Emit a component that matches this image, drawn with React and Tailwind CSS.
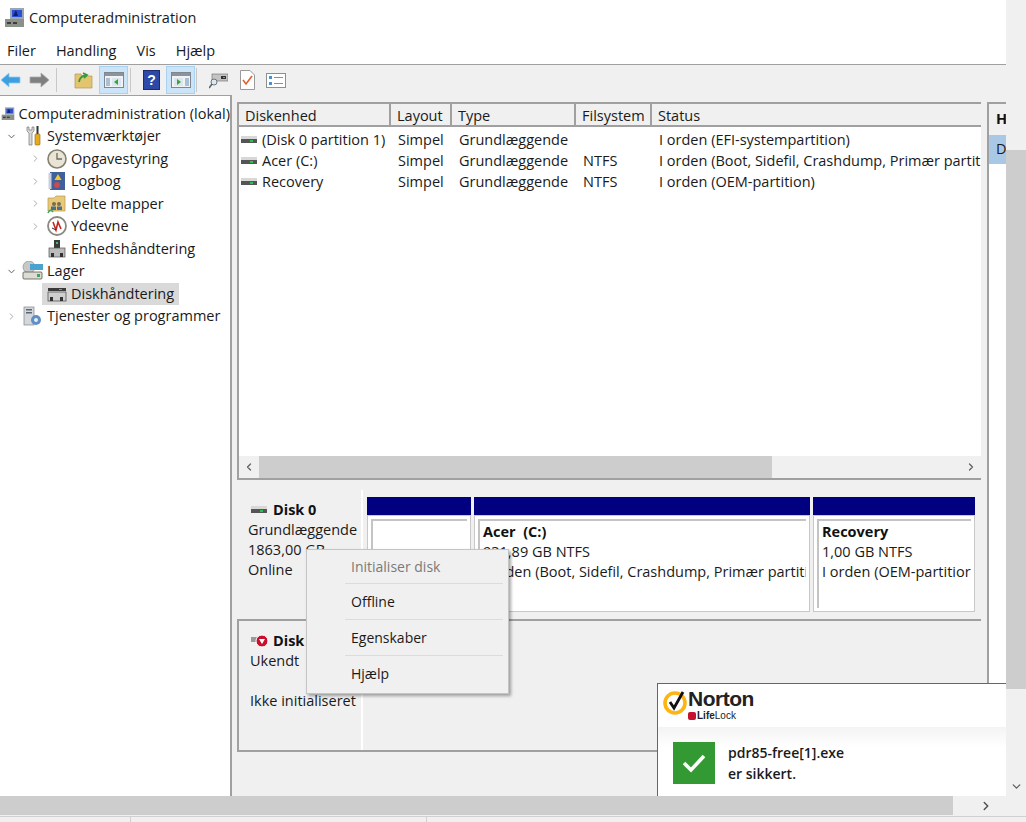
import { ChevronDown, ChevronRight, ChevronLeft } from 'lucide-react'

const font = { fontFamily: '"Open Sans", "Noto Sans", sans-serif' }

// --- small drawn icons ---
function DiskIcon({ className = '' }) {
  return (
    <svg width="16" height="10" viewBox="0 0 16 10" className={className}>
      <rect x="0" y="1" width="16" height="3" fill="#d8d8d8" />
      <rect x="0" y="4" width="16" height="4" fill="#555" />
      <rect x="9" y="5" width="3" height="2" fill="#2fc24a" />
    </svg>
  )
}

function ComputerIcon() {
  return (
    <svg width="22" height="20" viewBox="0 0 22 20">
      <rect x="6" y="0" width="14" height="11" fill="#9aa6b5" />
      <rect x="8" y="2" width="10" height="7" fill="#2a4fd0" />
      <path d="M9 8 L12 2 L14 8Z" fill="#10206a" />
      <rect x="1" y="11" width="19" height="8" fill="#8b9088" />
      <rect x="3" y="14" width="4" height="2" fill="#3c3c3c" />
      <rect x="9" y="14" width="4" height="2" fill="#3c3c3c" />
    </svg>
  )
}

function ToolsIcon() {
  return (
    <svg width="18" height="20" viewBox="0 0 18 20">
      <path d="M3 1 L3 5 L5 7 L5 19 L8 19 L8 7 L10 5 L10 1 L8 1 L8 4 L5 4 L5 1Z" fill="#d9d9d9" stroke="#777" strokeWidth="0.7" />
      <rect x="12.5" y="0" width="2" height="8" fill="#333" />
      <rect x="11" y="8" width="5" height="11" rx="1" fill="#e8a91c" stroke="#8a6510" strokeWidth="0.6" />
    </svg>
  )
}

function ClockIcon() {
  return (
    <svg width="20" height="20" viewBox="0 0 20 20">
      <circle cx="10" cy="10" r="9" fill="#e9e4d6" stroke="#85806f" strokeWidth="1.6" />
      <path d="M10 4 V10 H15" fill="none" stroke="#6f6a58" strokeWidth="1.3" />
    </svg>
  )
}

function LogIcon() {
  return (
    <svg width="18" height="20" viewBox="0 0 18 20">
      <rect x="2" y="1" width="15" height="18" fill="#3f5f9d" />
      <rect x="0.5" y="2" width="3" height="16" fill="#c9cfdb" />
      <path d="M10 3 L13.5 9 H6.5Z" fill="#f0c935" />
      <circle cx="9" cy="14" r="3" fill="#c94b4b" />
    </svg>
  )
}

function FolderIcon() {
  return (
    <svg width="19" height="20" viewBox="0 0 19 20">
      <path d="M1 4 H7 L9 2 H18 V17 H1Z" fill="#e8c97a" stroke="#b89a50" strokeWidth="0.7" />
      <circle cx="7" cy="10" r="2" fill="#7a6a50" />
      <circle cx="12" cy="10" r="2" fill="#7a6a50" />
      <rect x="4" y="12.5" width="5" height="3.5" fill="#4c6e8e" />
      <rect x="10" y="12.5" width="5" height="3.5" fill="#4c6e8e" />
      <path d="M1 19 Q3 14 6 18" fill="none" stroke="#3ea56a" strokeWidth="1.6" />
    </svg>
  )
}

function GaugeIcon() {
  return (
    <svg width="20" height="20" viewBox="0 0 20 20">
      <circle cx="10" cy="10" r="9" fill="#fff" stroke="#8a8a80" strokeWidth="1.8" />
      <path d="M6 6 L9 14 L11 6 L14 13" fill="none" stroke="#c0281f" strokeWidth="1.6" />
      <path d="M5 12 L9 14" stroke="#2c2c2c" strokeWidth="1" />
    </svg>
  )
}

function DeviceIcon() {
  return (
    <svg width="18" height="20" viewBox="0 0 18 20">
      <rect x="6" y="1" width="6" height="8" fill="#3a3a3a" />
      <rect x="8" y="3" width="2" height="2" fill="#39c552" />
      <rect x="1" y="9" width="16" height="9" fill="#bcbcbc" stroke="#555" strokeWidth="0.7" />
      <rect x="3" y="14" width="3" height="4" fill="#333" />
      <rect x="12" y="14" width="3" height="4" fill="#333" />
    </svg>
  )
}

function StorageIcon() {
  return (
    <svg width="22" height="20" viewBox="0 0 22 20">
      <circle cx="7" cy="6" r="6" fill="#c8c8c8" stroke="#8c8c8c" strokeWidth="0.7" />
      <rect x="8" y="3" width="13" height="6" fill="#4aa3cf" />
      <rect x="1" y="11" width="19" height="7" rx="1" fill="#dcdcd6" stroke="#55554f" strokeWidth="0.8" />
      <rect x="15" y="13" width="3" height="3" fill="#3fa552" />
    </svg>
  )
}

function DiskMgmtIcon() {
  return (
    <svg width="20" height="18" viewBox="0 0 20 18">
      <rect x="1" y="3" width="18" height="3" fill="#3a3a3a" />
      <rect x="12" y="4" width="3" height="1" fill="#3fc552" />
      <rect x="1" y="7" width="18" height="9" fill="#cfcfcf" stroke="#444" strokeWidth="0.7" />
      <rect x="3" y="12" width="3" height="4" fill="#333" />
      <rect x="13" y="12" width="3" height="4" fill="#333" />
    </svg>
  )
}

function ServicesIcon() {
  return (
    <svg width="19" height="20" viewBox="0 0 19 20">
      <rect x="1" y="1" width="10" height="18" fill="#d4d8dc" stroke="#7e848b" strokeWidth="0.7" />
      <rect x="3" y="3" width="6" height="1.5" fill="#5d6670" />
      <rect x="3" y="6" width="6" height="1.5" fill="#5d6670" />
      <circle cx="13" cy="14" r="5" fill="#5f8fc4" />
      <circle cx="13" cy="14" r="2" fill="#e5edf5" />
    </svg>
  )
}

// toolbar icons
function ArrowLeftBlue() {
  return (
    <svg width="21" height="16" viewBox="0 0 21 16">
      <path d="M1 8 L9 1 V5 H20 V11 H9 V15Z" fill="#3d9fe0" stroke="#8ccbf2" strokeWidth="0.8" />
    </svg>
  )
}

function ArrowRightGray() {
  return (
    <svg width="21" height="16" viewBox="0 0 21 16">
      <path d="M20 8 L12 1 V5 H1 V11 H12 V15Z" fill="#808080" stroke="#a8a8a8" strokeWidth="0.8" />
    </svg>
  )
}

function UpFolderIcon() {
  return (
    <svg width="19" height="18" viewBox="0 0 19 18">
      <path d="M1 3 H7 L8 5 H18 V17 H1Z" fill="#e3c56f" stroke="#b39a50" strokeWidth="0.7" />
      <path d="M5 11 Q6 5 12 4 M9 2 L13 4 L10 7" fill="none" stroke="#3c9a3c" strokeWidth="1.8" />
    </svg>
  )
}

function PaneIcon({ right }) {
  return (
    <svg width="20" height="16" viewBox="0 0 20 16">
      <rect x="0.5" y="0.5" width="19" height="15" fill="#f2f2f2" stroke="#7e8790" />
      <rect x="1" y="1" width="18" height="3" fill="#8b949c" />
      {right ? (
        <>
          <rect x="3" y="6" width="9" height="8" fill="#dce6ee" />
          <path d="M6 7 L10 10 L6 13Z" fill="#37a637" />
          <rect x="14" y="6" width="4" height="8" fill="#a9c0d4" />
        </>
      ) : (
        <>
          <rect x="2" y="6" width="4" height="8" fill="#a9c0d4" />
          <rect x="8" y="6" width="9" height="8" fill="#dce6ee" />
          <path d="M14 7 L10 10 L14 13Z" fill="#37a637" />
        </>
      )}
    </svg>
  )
}

function HelpBookIcon() {
  return (
    <svg width="17" height="20" viewBox="0 0 17 20">
      <rect x="0.5" y="0.5" width="16" height="19" fill="#2c49a8" stroke="#1a2c70" />
      <text x="8.5" y="15" textAnchor="middle" fontSize="14" fontWeight="700" fill="#fff" fontFamily="Liberation Sans, sans-serif">?</text>
    </svg>
  )
}

function ScanIcon() {
  return (
    <svg width="19" height="18" viewBox="0 0 19 18">
      <rect x="3" y="3" width="16" height="7" fill="#c4c4c4" stroke="#6a6a6a" strokeWidth="0.6" />
      <rect x="12" y="5" width="5" height="3" fill="#333" />
      <rect x="14" y="6" width="2" height="1" fill="#3fc552" />
      <circle cx="5" cy="11" r="3" fill="#dfe7ee" stroke="#6a7580" />
      <path d="M3 13 L0 17" stroke="#55606a" strokeWidth="1.5" />
    </svg>
  )
}

function CheckDocIcon() {
  return (
    <svg width="15" height="20" viewBox="0 0 15 20">
      <path d="M0.5 0.5 H10 L14.5 5 V19.5 H0.5Z" fill="#fff" stroke="#9a9a9a" />
      <path d="M3 10 L6 14 L12 6" fill="none" stroke="#e0602c" strokeWidth="1.6" />
    </svg>
  )
}

function ChecklistIcon() {
  return (
    <svg width="20" height="15" viewBox="0 0 20 15">
      <rect x="0.5" y="0.5" width="19" height="14" fill="#fff" stroke="#8a8f94" />
      <rect x="3" y="3" width="3" height="3" fill="#4a8fd0" />
      <rect x="3" y="9" width="3" height="3" fill="#4a8fd0" />
      <rect x="8" y="4" width="9" height="1" fill="#8a8f94" />
      <rect x="8" y="10" width="9" height="1" fill="#8a8f94" />
    </svg>
  )
}

function NortonLogo() {
  return (
    <svg width="26" height="26" viewBox="0 0 26 26">
      <circle cx="12" cy="14" r="10" fill="none" stroke="#fdb511" strokeWidth="3.6" />
      <path d="M7 13 L11 19 L20 3" fill="none" stroke="#111" strokeWidth="2.8" />
    </svg>
  )
}

// --- tree ---
const treeRows = [
  { label: 'Systemværktøjer', icon: <ToolsIcon />, chev: 'down', indent: 'pl-1' },
  { label: 'Opgavestyring', icon: <ClockIcon />, chev: 'right', indent: 'pl-[28px]' },
  { label: 'Logbog', icon: <LogIcon />, chev: 'right', indent: 'pl-[28px]' },
  { label: 'Delte mapper', icon: <FolderIcon />, chev: 'right', indent: 'pl-[28px]' },
  { label: 'Ydeevne', icon: <GaugeIcon />, chev: 'right', indent: 'pl-[28px]' },
  { label: 'Enhedshåndtering', icon: <DeviceIcon />, indent: 'pl-[28px]' },
  { label: 'Lager', icon: <StorageIcon />, chev: 'down', indent: 'pl-1' },
  { label: 'Diskhåndtering', icon: <DiskMgmtIcon />, indent: 'pl-[28px]', selected: true },
  { label: 'Tjenester og programmer', icon: <ServicesIcon />, chev: 'right', indent: 'pl-1' },
]

function TreeRow({ row }) {
  return (
    <div className={`flex items-center h-[22.5px] ${row.indent}`}>
      <span className="w-[14px] flex justify-center shrink-0">
        {row.chev === 'down' && <ChevronDown size={11} strokeWidth={2} className="text-[#555]" />}
        {row.chev === 'right' && <ChevronRight size={11} strokeWidth={2} className="text-[#a6a6a6]" />}
      </span>
      <div className={`flex items-center h-[22px] ${row.selected ? 'bg-[#d9d9d9] pr-[5px]' : ''}`}>
        <span className="w-[28px] pl-[1px] flex justify-center shrink-0">{row.icon}</span>
        <span className="ml-[1px] whitespace-nowrap">{row.label}</span>
      </div>
    </div>
  )
}

// --- volume list ---
const columns = [
  { label: 'Diskenhed', w: 'w-[152px]' },
  { label: 'Layout', w: 'w-[61px]' },
  { label: 'Type', w: 'w-[124px]' },
  { label: 'Filsystem', w: 'w-[76px]' },
  { label: 'Status', w: 'flex-1' },
]

const volumes = [
  ['(Disk 0 partition 1)', 'Simpel', 'Grundlæggende', '', 'I orden (EFI-systempartition)'],
  ['Acer (C:)', 'Simpel', 'Grundlæggende', 'NTFS', 'I orden (Boot, Sidefil, Crashdump, Primær partition)'],
  ['Recovery', 'Simpel', 'Grundlæggende', 'NTFS', 'I orden (OEM-partition)'],
]

function Partition({ className, children }) {
  return (
    <div className={`flex flex-col ${className}`}>
      <div className="h-[18px] bg-[#000080]" />
      <div className="flex-1 bg-white border border-[#c8c8c8] p-[3px]">
        <div className="h-full border-t-2 border-l-2 border-[#c4c4c4] pl-[3px] pt-[1px] leading-[20px] overflow-hidden whitespace-nowrap">
          {children}
        </div>
      </div>
    </div>
  )
}

export default function App() {
  return (
    <div style={font} className="relative flex h-[822px] w-[1026px] flex-col overflow-hidden bg-white text-[14.5px] text-[#1a1a1a]">
      <div className="flex min-h-0 flex-1">
        <div className="flex min-w-0 flex-1 flex-col">
          {/* title bar */}
          <div className="flex h-[35px] shrink-0 items-center pl-[4px] pt-[1px]">
            <ComputerIcon />
            <span className="ml-[3px] text-[14.5px]">Computeradministration</span>
          </div>

          {/* menu */}
          <div className="flex h-[30px] shrink-0 items-center gap-[20px] pl-[7px] pt-[2px] border-b border-[#a0a0a0]">
            <span>Filer</span>
            <span>Handling</span>
            <span>Vis</span>
            <span>Hjælp</span>
          </div>

          {/* toolbar */}
          <div className="flex h-[30px] shrink-0 items-center bg-[#f0f0f0] pl-[0px]">
            <ArrowLeftBlue />
            <span className="ml-[8px]"><ArrowRightGray /></span>
            <span className="mx-[6px] h-[24px] w-px bg-[#c8c8c8]" />
            <span className="ml-[11px]"><UpFolderIcon /></span>
            <span className="ml-[6px] flex h-[28px] w-[29px] items-center justify-center bg-[#cce4f7] border border-[#a8d2f0]"><PaneIcon /></span>
            <span className="ml-[2px] h-[24px] w-px bg-[#c8c8c8]" />
            <span className="ml-[12px]"><HelpBookIcon /></span>
            <span className="ml-[6px] flex h-[28px] w-[29px] items-center justify-center bg-[#cce4f7] border border-[#a8d2f0]"><PaneIcon right /></span>
            <span className="ml-[1px] h-[24px] w-px bg-[#c8c8c8]" />
            <span className="ml-[12px]"><ScanIcon /></span>
            <span className="ml-[12px]"><CheckDocIcon /></span>
            <span className="ml-[11px]"><ChecklistIcon /></span>
          </div>

          {/* main area */}
          <div className="flex min-h-0 flex-1 bg-[#f0f0f0]">
            {/* tree */}
            <div className="w-[232px] shrink-0 border-t border-r-2 border-[#a0a0a0] bg-white pt-[7px] overflow-hidden">
              <div className="flex h-[22px] items-center pl-[1px]">
                <ComputerIcon />
                <span className="ml-[3px] whitespace-nowrap">Computeradministration (lokal)</span>
              </div>
              {treeRows.map((row) => (
                <TreeRow key={row.label} row={row} />
              ))}
            </div>

            {/* center */}
            <div className="ml-[5px] flex w-[744px] shrink-0 flex-col pt-[7px]">
              {/* volume list */}
              <div className="flex h-[376px] shrink-0 flex-col border-t-2 border-l-2 border-[#a0a0a0] bg-white">
                <div className="flex h-[23px] shrink-0 items-end border-b-2 border-[#a0a0a0] bg-[#f0f0f0]">
                  {columns.map((col) => (
                    <div key={col.label} className={`${col.w} h-full border-r-2 border-[#a0a0a0] pl-[6px] pt-[2px] leading-[20px] last:border-r-0`}>
                      {col.label}
                    </div>
                  ))}
                </div>
                <div className="flex-1 pt-[2px] overflow-hidden">
                  {volumes.map((row) => (
                    <div key={row[0]} className="flex h-[21px] items-center whitespace-nowrap">
                      <div className="w-[152px] flex items-center pl-[2px] shrink-0">
                        <DiskIcon />
                        <span className="ml-[5px]">{row[0]}</span>
                      </div>
                      <div className="w-[61px] pl-[7px] shrink-0">{row[1]}</div>
                      <div className="w-[124px] pl-[7px] shrink-0">{row[2]}</div>
                      <div className="w-[76px] pl-[7px] shrink-0">{row[3]}</div>
                      <div className="pl-[7px] min-w-0 overflow-hidden">{row[4]}</div>
                    </div>
                  ))}
                </div>
                <div className="flex h-[22px] shrink-0 items-center bg-[#f0f0f0]">
                  <span className="w-[20px] flex justify-center"><ChevronLeft size={12} strokeWidth={2.5} className="text-[#606060]" /></span>
                  <div className="h-full w-[513px] bg-[#cdcdcd]" />
                  <div className="flex-1" />
                  <span className="w-[20px] flex justify-center"><ChevronRight size={12} strokeWidth={2.5} className="text-[#606060]" /></span>
                </div>
              </div>

              <div className="h-[12px] shrink-0 border-t-2 border-[#a0a0a0]" />

              {/* graphical view */}
              <div className="flex h-[131px] shrink-0 border-b-2 border-[#a0a0a0]">
                <div className="w-[126px] shrink-0 border-r-2 border-white pl-[11px] pt-[10px] leading-[20px] whitespace-nowrap overflow-hidden">
                  <div className="flex items-center font-bold">
                    <DiskIcon className="ml-[3px]" />
                    <span className="ml-[6px] text-[#111]">Disk 0</span>
                  </div>
                  <div>Grundlæggende</div>
                  <div>1863,00 GB</div>
                  <div>Online</div>
                </div>
                <div className="flex flex-1 gap-[3px] pl-[4px] pr-[4px] pt-[7px] pb-[7px]">
                  <Partition className="w-[104px]" />
                  <Partition className="w-[336px]">
                    <div className="font-bold text-[#111]">Acer&nbsp; (C:)</div>
                    <div>931,89 GB NTFS</div>
                    <div>I orden (Boot, Sidefil, Crashdump, Primær partiti</div>
                  </Partition>
                  <Partition className="w-[162px]">
                    <div className="font-bold text-[#111]">Recovery</div>
                    <div>1,00 GB NTFS</div>
                    <div>I orden (OEM-partitior</div>
                  </Partition>
                </div>
              </div>

              <div className="flex h-[131px] shrink-0 border-b-2 border-[#a0a0a0]">
                <div className="w-[126px] shrink-0 border-r-2 border-white pl-[11px] pt-[10px] leading-[20px] whitespace-nowrap overflow-hidden border-l-2 border-l-[#a0a0a0]">
                  <div className="flex items-center font-bold">
                    <svg width="18" height="14" viewBox="0 0 18 14" className="ml-[1px]">
                      <rect x="0" y="3" width="8" height="5" fill="#9a9a9a" />
                      <circle cx="11" cy="7" r="6" fill="#c8102e" stroke="#fff" />
                      <path d="M8 5 H14 L11 10Z" fill="#fff" />
                    </svg>
                    <span className="ml-[4px] text-[#111]">Disk 1</span>
                  </div>
                  <div>Ukendt</div>
                  <div className="h-[20px]" />
                  <div>Ikke initialiseret</div>
                </div>
              </div>
            </div>

            {/* action pane */}
            <div className="ml-[6px] flex min-w-0 flex-1 flex-col pt-[7px]">
              <div className="h-full border-t-2 border-l-2 border-[#a0a0a0] bg-white overflow-hidden">
                <div className="h-[31px] bg-[#f0f0f0] pl-[7px] pt-[3px] font-bold leading-[24px] text-[#111]">H</div>
                <div className="h-[29px] bg-[#a9c8e6] pl-[7px] leading-[28px]">D</div>
              </div>
            </div>
          </div>
        </div>

        {/* page scrollbar */}
        <div className="flex w-[20px] shrink-0 flex-col bg-[#f0f0f0]">
          <div className="h-[150px]" />
          <div className="h-[539px] bg-[#cdcdcd]" />
          <div className="flex flex-1 items-end justify-center pb-[3px]">
            <ChevronDown size={13} strokeWidth={2.5} className="text-[#606060]" />
          </div>
        </div>
      </div>

      {/* bottom scrollbar */}
      <div className="flex h-[20px] shrink-0 bg-[#f0f0f0]">
        <div className="h-[19px] w-[953px] bg-[#cdcdcd]" />
        <div className="flex flex-1 items-center justify-center pr-[8px]">
          <ChevronRight size={14} strokeWidth={2.5} className="text-[#505050]" />
        </div>
      </div>
      <div className="flex h-[6px] shrink-0 border-t border-[#d0d0d0] bg-[#f0f0f0]">
        <div className="w-[131px] border-r border-[#d0d0d0]" />
        <div className="w-[148px] ml-[148px] border-r border-[#d0d0d0]" />
      </div>

      {/* context menu */}
      <div className="absolute left-[306px] top-[549px] h-[145px] w-[203px] border border-[#c4c4c4] bg-[#f0f0f0] px-[1px] py-[1px] shadow-[2px_2px_3px_rgba(0,0,0,0.35)] leading-[20px] text-[14px]">
        <div className="ml-[37px] mr-[4px] flex h-[33px] items-center border-b border-[#dcdcdc] pl-[6px] text-[#7a7a7a]">Initialiser disk</div>
        <div className="ml-[37px] mr-[4px] flex h-[36px] items-center border-b border-[#dcdcdc] pl-[6px]">Offline</div>
        <div className="ml-[37px] mr-[4px] flex h-[36px] items-center border-b border-[#dcdcdc] pl-[6px]">Egenskaber</div>
        <div className="ml-[37px] mr-[4px] flex h-[36px] items-center pl-[6px]">Hjælp</div>
      </div>

      {/* norton popup */}
      <div className="absolute left-[657px] top-[683px] h-[113px] w-[349px] overflow-hidden border-l border-t border-[#666] bg-white">
        <div className="flex h-[43px] items-start pl-[5px] pt-[5px]">
          <NortonLogo />
          <div className="flex flex-col -ml-[1px]">
            <span style={{ fontFamily: '"Liberation Sans", sans-serif' }} className="text-[21px] leading-[20px] font-bold tracking-[-0.5px] text-[#222]">Norton</span>
            <span className="flex items-center leading-[13px]">
              <span className="mr-[1px] h-[8px] w-[8px] rounded-[2px] bg-[#c8102e]" />
              <span style={{ fontFamily: '"Liberation Sans", sans-serif' }} className="text-[10px] font-bold text-[#222]">Life<span className="font-normal">Lock</span></span>
            </span>
          </div>
        </div>
        <div className="flex h-[70px] bg-gradient-to-b from-[#f4f4f4] to-white to-[30%] pl-[15px] pt-[15px]">
          <div className="flex h-[42px] w-[42px] shrink-0 items-center justify-center bg-[#339933]">
            <svg width="24" height="20" viewBox="0 0 24 20">
              <path d="M2 10 L9 17 L22 3" fill="none" stroke="#fff" strokeWidth="3.6" />
            </svg>
          </div>
          <div className="ml-[13px] text-[14px] leading-[21px] font-semibold text-[#1a1a1a]">
            <div>pdr85-free[1].exe</div>
            <div>er sikkert.</div>
            <div className="mt-[7px] text-[12px] font-normal text-[#2a9fd6]">Vis detaljer</div>
          </div>
        </div>
      </div>
    </div>
  )
}
